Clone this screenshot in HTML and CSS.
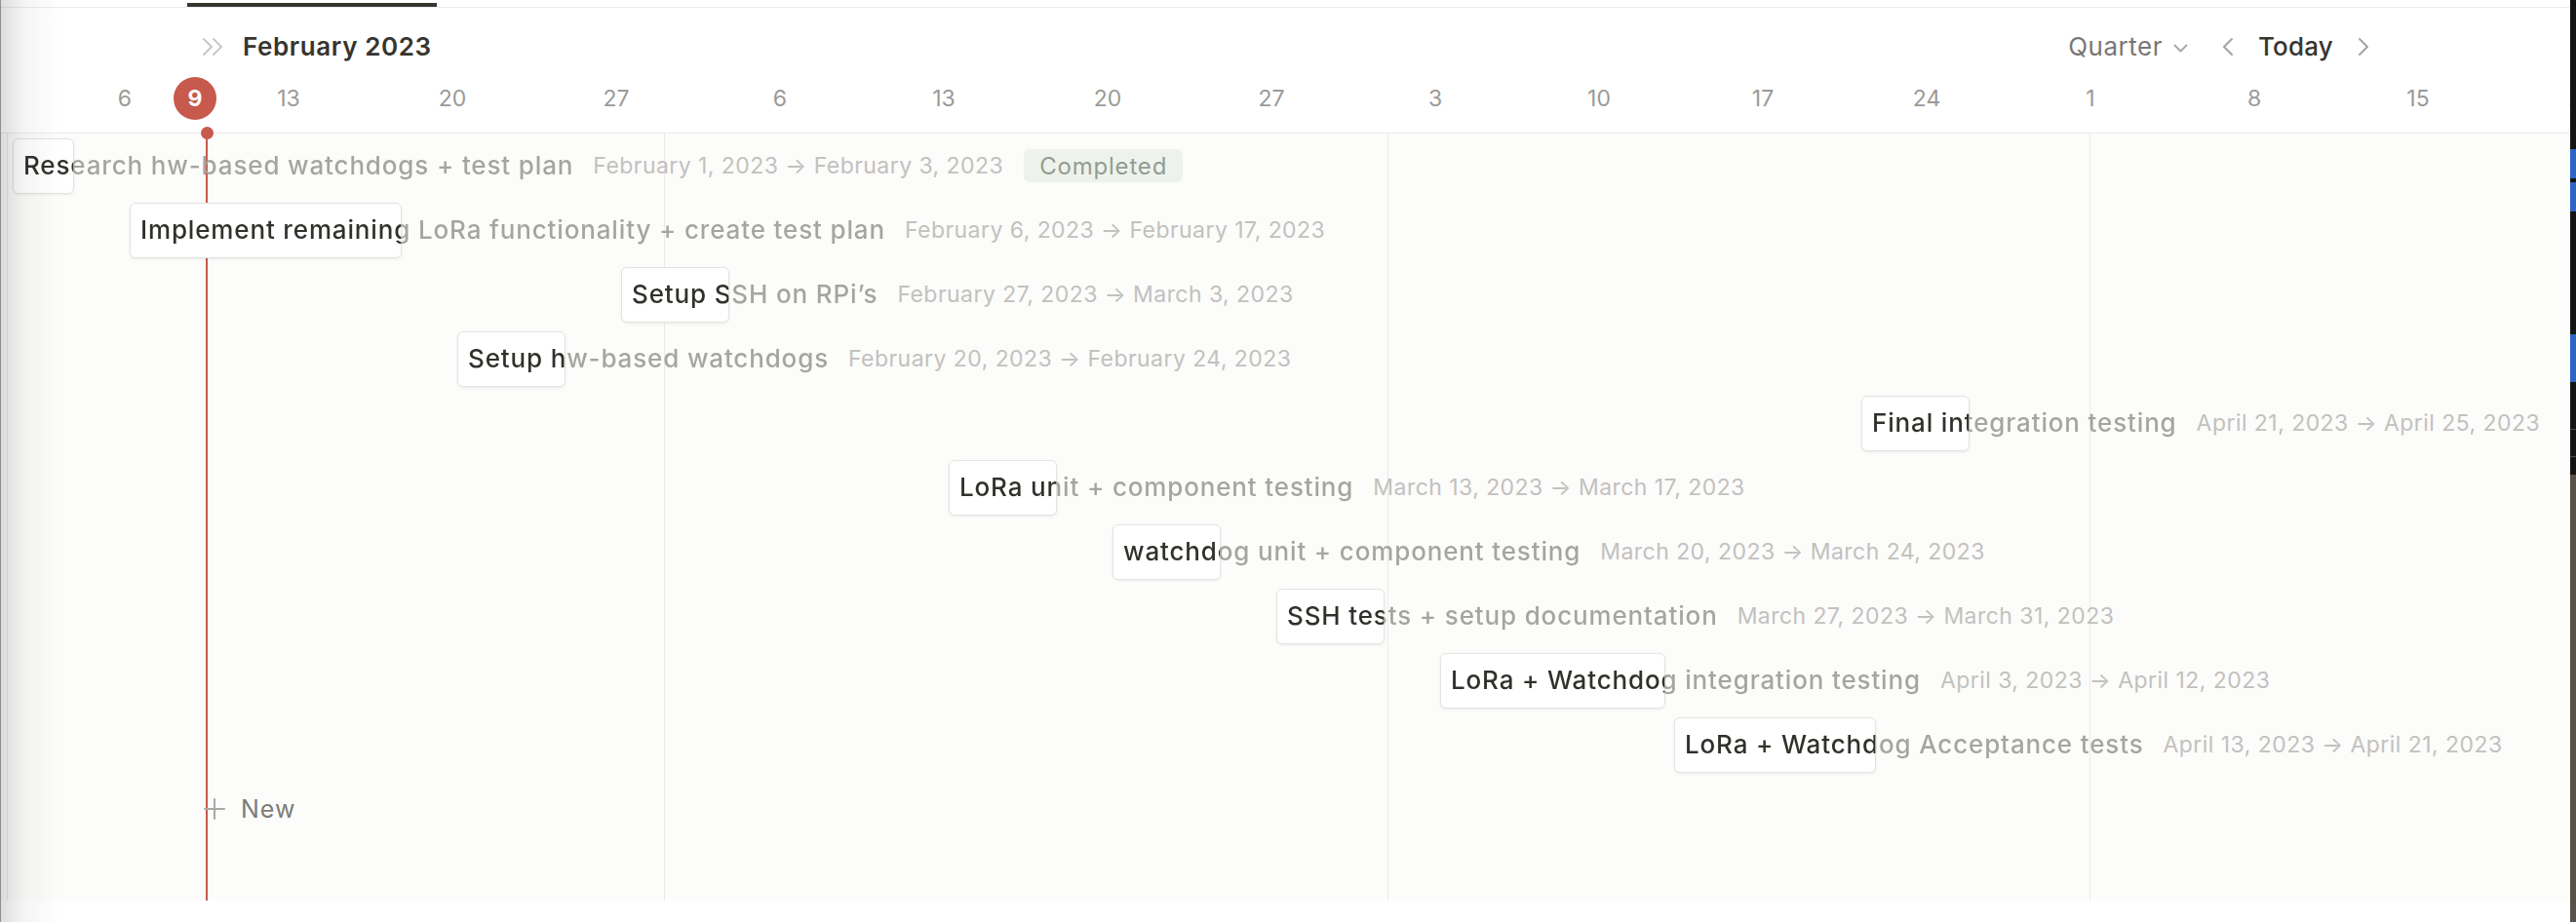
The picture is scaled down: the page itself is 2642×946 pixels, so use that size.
FILE: index.html
```html
<!DOCTYPE html>
<html lang="en">
<head>
<meta charset="utf-8">
<title>Timeline</title>
<link rel="stylesheet" href="styles.css">
</head>
<body>
<div class="app">
  <div class="main">
    <div class="tabbar"><div class="tab-underline"></div></div>
    <header class="header">
      <div class="controls">
        <svg class="collapse-icon" width="22" height="20" viewBox="0 0 22 20" fill="none" stroke="#c9c8c5" stroke-width="2" stroke-linecap="round" stroke-linejoin="round"><polyline points="2,2 10,10 2,18"/><polyline points="12,2 20,10 12,18"/></svg>
        <span class="month">February 2023</span>
        <div class="right-controls">
          <span class="zoom-level">Quarter</span>
          <svg class="caret" width="15" height="9" viewBox="0 0 15 9" fill="none" stroke="#a5a4a0" stroke-width="1.8" stroke-linecap="round" stroke-linejoin="round"><polyline points="1.5,1.5 7.5,7.5 13.5,1.5"/></svg>
          <svg class="nav prev" width="14" height="20" viewBox="0 0 14 20" fill="none" stroke="#a5a4a0" stroke-width="2" stroke-linecap="round" stroke-linejoin="round"><polyline points="11,2 3,10 11,18"/></svg>
          <span class="today">Today</span>
          <svg class="nav next" width="14" height="20" viewBox="0 0 14 20" fill="none" stroke="#a5a4a0" stroke-width="2" stroke-linecap="round" stroke-linejoin="round"><polyline points="3,2 11,10 3,18"/></svg>
        </div>
      </div>
      <div class="days">
        <span class="day">6</span><span class="day">13</span><span class="day">20</span><span class="day">27</span>
        <span class="day">6</span><span class="day">13</span><span class="day">20</span><span class="day">27</span>
        <span class="day">3</span><span class="day">10</span><span class="day">17</span><span class="day">24</span>
        <span class="day">1</span><span class="day">8</span><span class="day">15</span><span class="day">22</span>
        <span class="today-badge">9</span>
      </div>
    </header>
    <div class="grid">
      <div class="row"><div class="item" style="--x:13px;--w:63px"><div class="card"></div><span class="title">Research hw-based watchdogs + test plan</span><span class="dates">February 1, 2023 → February 3, 2023</span><span class="pill">Completed</span></div></div>
      <div class="row"><div class="item" style="--x:133px;--w:279px"><div class="card"></div><span class="title">Implement remaining LoRa functionality + create test plan</span><span class="dates">February 6, 2023 → February 17, 2023</span></div></div>
      <div class="row"><div class="item" style="--x:637px;--w:111px"><div class="card"></div><span class="title">Setup SSH on RPi’s</span><span class="dates">February 27, 2023 → March 3, 2023</span></div></div>
      <div class="row"><div class="item" style="--x:469px;--w:111px"><div class="card"></div><span class="title">Setup hw-based watchdogs</span><span class="dates">February 20, 2023 → February 24, 2023</span></div></div>
      <div class="row"><div class="item" style="--x:1909px;--w:111px"><div class="card"></div><span class="title">Final integration testing</span><span class="dates">April 21, 2023 → April 25, 2023</span></div></div>
      <div class="row"><div class="item" style="--x:973px;--w:111px"><div class="card"></div><span class="title">LoRa unit + component testing</span><span class="dates">March 13, 2023 → March 17, 2023</span></div></div>
      <div class="row"><div class="item" style="--x:1141px;--w:111px"><div class="card"></div><span class="title">watchdog unit + component testing</span><span class="dates">March 20, 2023 → March 24, 2023</span></div></div>
      <div class="row"><div class="item" style="--x:1309px;--w:111px"><div class="card"></div><span class="title">SSH tests + setup documentation</span><span class="dates">March 27, 2023 → March 31, 2023</span></div></div>
      <div class="row"><div class="item" style="--x:1477px;--w:231px"><div class="card"></div><span class="title">LoRa + Watchdog integration testing</span><span class="dates">April 3, 2023 → April 12, 2023</span></div></div>
      <div class="row"><div class="item" style="--x:1717px;--w:207px"><div class="card"></div><span class="title">LoRa + Watchdog Acceptance tests</span><span class="dates">April 13, 2023 → April 21, 2023</span></div></div>
      <div class="row new-row">
        <svg class="plus" width="24" height="24" viewBox="0 0 24 24" fill="none" stroke="#a9a8a4" stroke-width="2" stroke-linecap="round"><line x1="12" y1="2" x2="12" y2="22"/><line x1="2" y1="12" x2="22" y2="12"/></svg>
        <span class="new-label">New</span>
      </div>
    </div>
    <div class="footer"></div>
    <div class="today-dot"></div>
    <div class="left-fade"></div>
  </div>
  <div class="edge"></div>
</div>
</body>
</html>
```
FILE: styles.css
```css
* { box-sizing: border-box; }
html, body {
  margin: 0;
  padding: 0;
  width: 2642px;
  height: 946px;
  overflow: hidden;
  background: #ffffff;
  font-family: Inter, "Noto Sans", "Liberation Sans", sans-serif;
  color: #37352f;
}
.app {
  display: flex;
  width: 2642px;
  height: 946px;
}
.main {
  position: relative;
  width: 2636px;
  height: 946px;
  overflow: hidden;
  display: flex;
  flex-direction: column;
  background: #ffffff;
}
.edge {
  width: 6px;
  height: 946px;
  background:
    linear-gradient(#2f63c4, #2f63c4) 0 153px / 6px 30px no-repeat,
    linear-gradient(#2f63c4, #2f63c4) 0 187px / 6px 30px no-repeat,
    linear-gradient(#2f63c4, #2f63c4) 0 343px / 6px 49px no-repeat,
    linear-gradient(#4a4a4a, #4a4a4a) 0 440px / 6px 1px no-repeat,
    linear-gradient(#4a4a4a, #4a4a4a) 0 468px / 6px 1px no-repeat,
    linear-gradient(#5a5048, #5a5048) 0 487px / 6px 459px no-repeat,
    #141414;
}

/* top tab strip */
.tabbar {
  height: 8px;
  flex: none;
  border-bottom: 1px solid #ebebea;
  padding-top: 3px;
}
.tab-underline {
  margin-left: 192px;
  width: 256px;
  height: 4px;
  background: #37352f;
}

/* header */
.header {
  flex: none;
  height: 129px;
  padding-top: 20px;
  border-bottom: 1px solid #e9e9e7;
  position: relative;
}
.controls {
  height: 40px;
  display: flex;
  align-items: center;
  padding-left: 207px;
  padding-right: 205px;
}
.collapse-icon { flex: none; }
.month {
  margin-left: 20px;
  font-size: 26px;
  font-weight: 600;
  letter-spacing: 0.6px;
  line-height: 40px;
  color: #37352f;
  white-space: nowrap;
}
.right-controls {
  margin-left: auto;
  display: flex;
  align-items: center;
}
.zoom-level {
  font-size: 26px;
  letter-spacing: 0.5px;
  line-height: 40px;
  color: #787774;
}
.caret { margin-left: 11px; margin-top: 2px; }
.nav.prev { margin-left: 34px; }
.today {
  margin-left: 24px;
  font-size: 26px;
  font-weight: 500;
  letter-spacing: 0.2px;
  line-height: 40px;
  color: #37352f;
}
.nav.next { margin-left: 24px; }

.days {
  position: relative;
  margin-top: 11px;
  height: 44px;
  display: flex;
  padding-left: 44px;
}
.day {
  flex: none;
  width: 168px;
  text-align: center;
  font-size: 23px;
  line-height: 44px;
  color: #9b9a97;
}
.today-badge {
  position: absolute;
  left: 178px;
  top: 0;
  width: 44px;
  height: 44px;
  border-radius: 50%;
  background: #c75a4d;
  color: #ffffff;
  font-size: 23px;
  font-weight: 700;
  line-height: 44px;
  text-align: center;
}

/* timeline grid */
.grid {
  flex: none;
  height: 787px;
  display: flex;
  flex-direction: column;
  background:
    linear-gradient(#c75a4d, #c75a4d) 211px 0 / 2px 100% no-repeat,
    linear-gradient(#e8e8e6, #e8e8e6) 7px 0 / 1px 100% no-repeat,
    linear-gradient(#ebebea, #ebebea) 681px 0 / 1px 100% no-repeat,
    linear-gradient(#ebebea, #ebebea) 1423px 0 / 1px 100% no-repeat,
    linear-gradient(#ebebea, #ebebea) 2143px 0 / 1px 100% no-repeat,
    #fcfcfb;
}
.row {
  flex: none;
  height: 66px;
  display: flex;
  align-items: center;
}
.item {
  display: flex;
  align-items: center;
  margin-left: var(--x);
  height: 66px;
}
.card {
  flex: none;
  width: var(--w);
  height: 57px;
  background: #ffffff;
  border: 1px solid #e3e3e1;
  border-radius: 6px;
  box-shadow: 0 1px 3px rgba(15, 15, 15, 0.07);
}
.title {
  flex: none;
  margin-left: calc(11px - var(--w));
  font-size: 26px;
  font-weight: 500;
  letter-spacing: 0.85px;
  line-height: 40px;
  white-space: nowrap;
  color: transparent;
  background: linear-gradient(to right, #32302b calc(var(--w) - 12px), #a5a4a0 calc(var(--w) - 12px));
  -webkit-background-clip: text;
  background-clip: text;
}
.dates {
  flex: none;
  margin-left: 20px;
  font-size: 23px;
  letter-spacing: 0.45px;
  line-height: 40px;
  color: #c2c1be;
  white-space: nowrap;
}
.pill {
  flex: none;
  margin-left: 21px;
  height: 34px;
  padding: 0 16px;
  display: flex;
  align-items: center;
  border-radius: 6px;
  background: #edf3ec;
  color: #949c92;
  font-size: 24px;
  letter-spacing: 0.8px;
  white-space: nowrap;
}
.new-row { padding-left: 208px; }
.plus { flex: none; }
.new-label {
  margin-left: 15px;
  font-size: 25px;
  letter-spacing: 1px;
  color: #7d7c78;
}
.footer {
  flex: 1;
  background: #ffffff;
}

/* overlays */
.today-dot {
  position: absolute;
  left: 205.5px;
  top: 129.5px;
  width: 13px;
  height: 13px;
  border-radius: 50%;
  background: #c75a4d;
}
.left-fade {
  position: absolute;
  left: 0;
  top: 0;
  width: 62px;
  height: 946px;
  border-left: 1px solid #8f8f8f;
  background: linear-gradient(to right, rgba(0, 0, 0, 0.13), rgba(0, 0, 0, 0.04) 40%, rgba(0, 0, 0, 0));
  pointer-events: none;
}
```
